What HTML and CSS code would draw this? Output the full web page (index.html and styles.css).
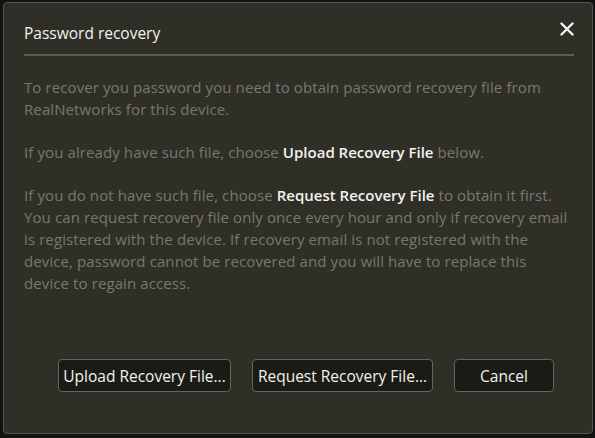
FILE: index.html
```html
<!DOCTYPE html>
<html>
<head>
<meta charset="utf-8">
<link rel="stylesheet" href="styles.css">
</head>
<body>
<div class="dialog">
  <div class="header">
    <div class="title">Password recovery</div>
    <button class="close" aria-label="Close">
      <svg width="14" height="14" viewBox="0 0 14 14"><path d="M1.5 1.5 L12.5 12.5 M12.5 1.5 L1.5 12.5" stroke="#f4f4f0" stroke-width="2.4" stroke-linecap="round"/></svg>
    </button>
  </div>
  <div class="body">
    <p>To recover you password you need to obtain password recovery file from<br>RealNetworks for this device.</p>
    <p>If you already have such file, choose <b>Upload Recovery File</b> below.</p>
    <p>If you do not have such file, choose <b>Request Recovery File</b> to obtain it first.<br>You can request recovery file only once every hour and only if recovery email<br>is registered with the device. If recovery email is not registered with the<br>device, password cannot be recovered and you will have to replace this<br>device to regain access.</p>
  </div>
  <div class="actions">
    <button class="btn btn-upload">Upload Recovery File...</button>
    <button class="btn btn-request">Request Recovery File...</button>
    <button class="btn btn-cancel">Cancel</button>
  </div>
</div>
</body>
</html>
```
FILE: styles.css
```css
html, body {
  margin: 0;
  padding: 0;
  background: #121210;
  width: 595px;
  height: 438px;
  overflow: hidden;
  font-family: "Open Sans", "Noto Sans", sans-serif;
}
.dialog {
  box-sizing: border-box;
  margin: 2px 2px 0 3px;
  width: 590px;
  height: 432px;
  background: #2f2f27;
  border: 1px solid #56564f;
  border-radius: 4px;
  display: flex;
  flex-direction: column;
}
.header {
  margin: 0 18px 0 20px;
  height: 53px;
  border-bottom: 2px solid #5d5d55;
  display: flex;
  align-items: center;
  justify-content: space-between;
  box-sizing: border-box;
  padding-top: 8px;
}
.title {
  color: #f2f2ee;
  font-size: 15.5px;
  font-weight: 500;
}
.close {
  background: none;
  border: 0;
  padding: 0;
  width: 16px;
  height: 16px;
  display: flex;
  align-items: center;
  justify-content: center;
  position: relative;
  top: -4px;
  right: -1px;
}
.body {
  padding: 20px 20px 0 20px;
  color: #78786e;
  font-size: 15px;
  letter-spacing: 0.1px;
  line-height: 22px;
  white-space: nowrap;
}
.body p {
  margin: 0 0 21px 0;
}
.body b {
  color: #f2f2ee;
  font-weight: 600;
  letter-spacing: 0;
}
.actions {
  margin-top: auto;
  margin-bottom: 41px;
  display: flex;
  justify-content: flex-end;
  gap: 21px;
  padding-right: 38px;
}
.btn {
  height: 33px;
  box-sizing: border-box;
  background: #1b1b15;
  border: 1px solid #66665e;
  border-radius: 4px;
  color: #f2f2ee;
  font-family: "Open Sans", "Noto Sans", sans-serif;
  font-size: 15.5px;
  font-weight: 500;
  padding: 0;
}
.btn-upload { width: 173px; }
.btn-request { width: 181px; }
.btn-cancel { width: 100px; }
```
